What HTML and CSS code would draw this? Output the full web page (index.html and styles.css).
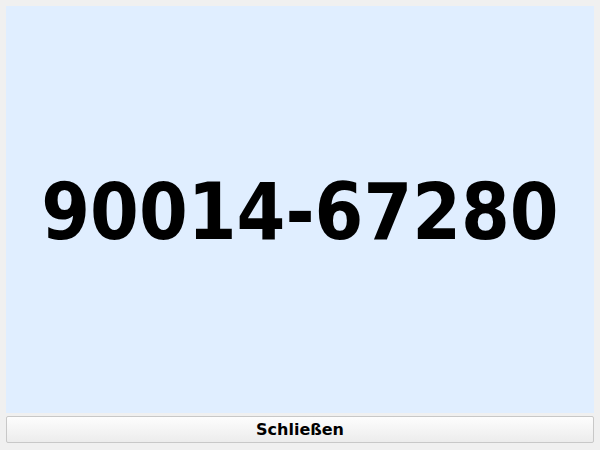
FILE: index.html
```html
<!DOCTYPE html>
<html lang="de">
<head>
<meta charset="utf-8">
<title>Code</title>
<link rel="stylesheet" href="styles.css">
</head>
<body>
<div class="app">
  <div class="panel"><span class="code">90014-67280</span></div>
  <button class="close">Schließen</button>
</div>
</body>
</html>
```
FILE: styles.css
```css
html, body {
  margin: 0;
  height: 100%;
  background: #f0f0f0;
}
.app {
  box-sizing: border-box;
  height: 450px;
  padding: 6px 6px 7px 6px;
  display: flex;
  flex-direction: column;
  gap: 3px;
}
.panel {
  flex: 1;
  background: #e0eeff;
  display: flex;
  align-items: center;
  justify-content: center;
}
.code {
  font-family: "DejaVu Sans Condensed", "DejaVu Sans", sans-serif;
  font-weight: bold;
  font-size: 78px;
  color: #000;
  margin-top: 4px;
}
.close {
  height: 27px;
  border: 1px solid #c8c8c8;
  border-radius: 2px;
  background: linear-gradient(#fdfdfd, #ececec);
  font-family: "DejaVu Sans", sans-serif;
  font-weight: bold;
  font-size: 16px;
  color: #000;
  padding: 0;
}
```
